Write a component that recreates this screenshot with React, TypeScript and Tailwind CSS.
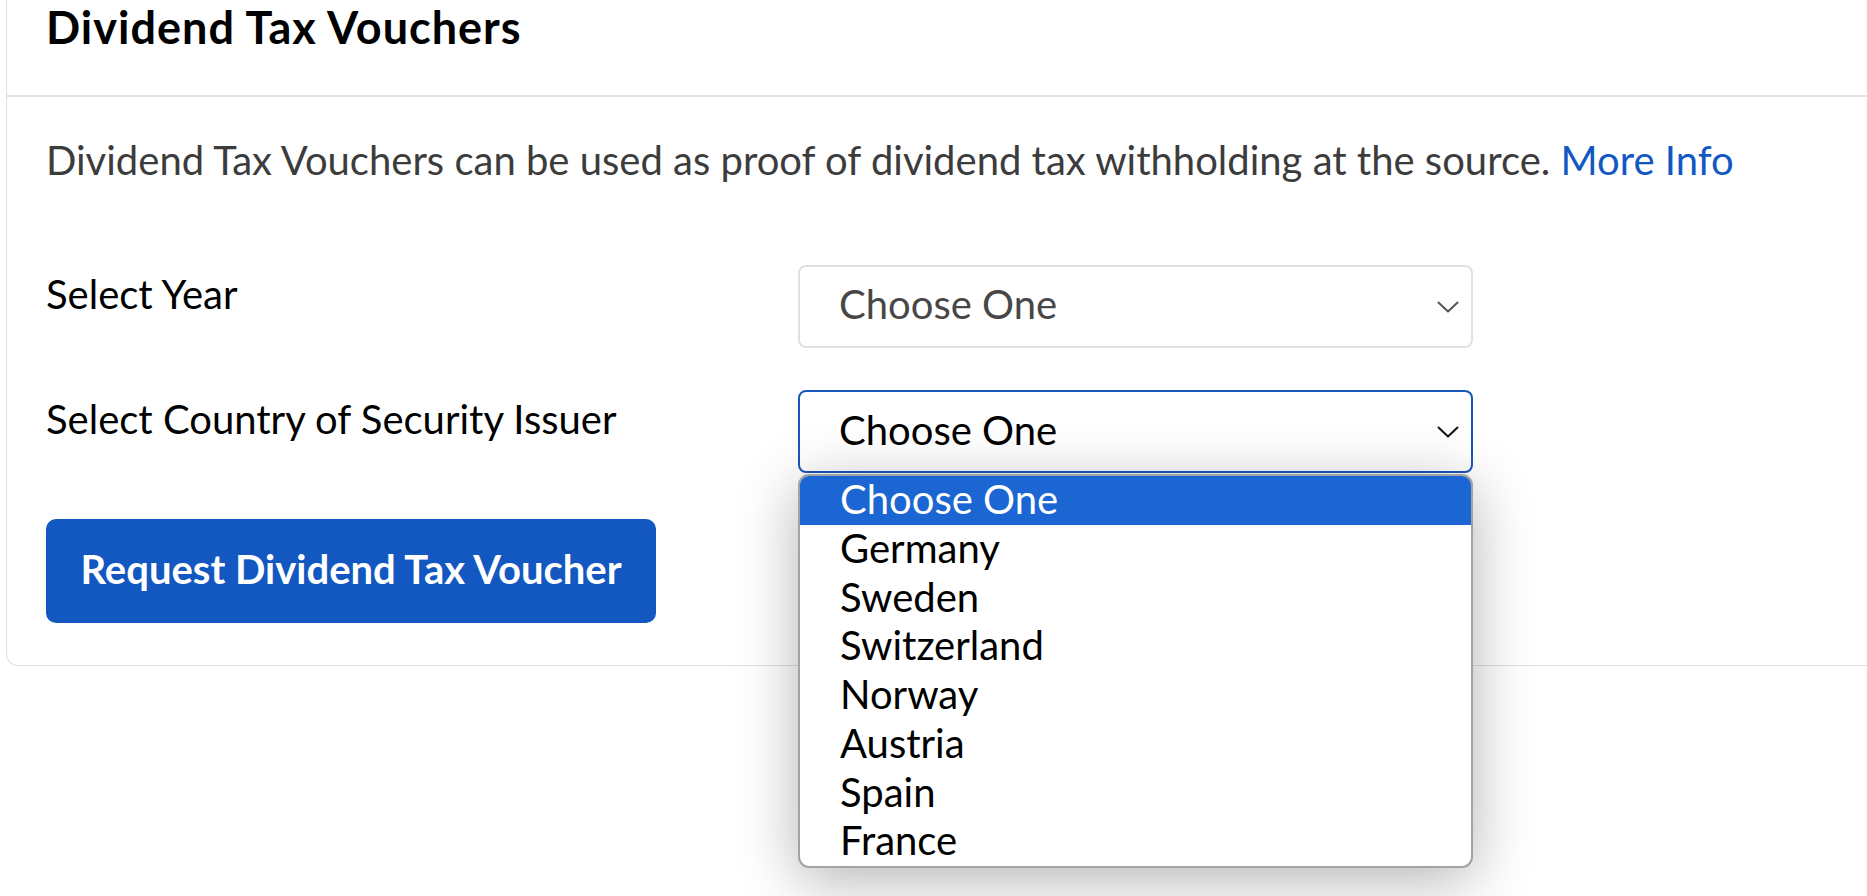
import React from "react";

const countries = ["Choose One", "Germany", "Sweden", "Switzerland", "Norway", "Austria", "Spain", "France"];

function Chevron({ color }: { color: string }) {
  return (
    <svg width="22" height="12" viewBox="0 0 22 12" fill="none" className="shrink-0">
      <path d="M1.5 1.5 L11 10.5 L20.5 1.5" stroke={color} strokeWidth="2" strokeLinecap="round" strokeLinejoin="round" />
    </svg>
  );
}

export default function App() {
  return (
    <div
      className="min-h-screen w-full bg-white overflow-hidden"
      style={{ fontFamily: "Lato, 'Liberation Sans', sans-serif" }}
    >
      {/* ── Card ── */}
      <div className="ml-[6px] -mt-[4px] w-[1900px] border border-[#dedede] rounded-b-[12px]">
        <div className="h-[100px] border-b-2 border-[#e2e2e2] px-[39px] pt-[3px]">
          <h1 className="text-[45px] leading-[54px] font-bold tracking-[1px] text-black">Dividend Tax Vouchers</h1>
        </div>

        <div className="px-[39px] pt-[39px] pb-[42px]">
          <p className="text-[40px] leading-[48px] text-[#3c3c3c]">
            Dividend Tax Vouchers can be used as proof of dividend tax withholding at the source.{" "}
            <a className="text-[#1258c3]">More Info</a>
          </p>

          {/* Year */}
          <div className="flex mt-[81px]">
            <div className="w-[752px] pt-[5px] text-[40px] leading-[48px] text-black">Select Year</div>
            <div className="w-[675px] h-[83px] border-2 border-[#e0e0e0] rounded-[8px] flex items-center justify-between pl-[39px] pr-[12px]">
              <span className="text-[40px] leading-[48px] pb-[5px] text-[#474747]">Choose One</span>
              <Chevron color="#555555" />
            </div>
          </div>

          {/* Country */}
          <div className="flex mt-[42px]">
            <div className="w-[752px] pt-[5px] text-[40px] leading-[48px] text-black">
              Select Country of Security Issuer
            </div>
            <div className="relative w-[675px]">
              <div className="h-[83px] border-2 border-[#1a56be] rounded-[8px] flex items-center justify-between pl-[39px] pr-[12px]">
                <span className="text-[40px] leading-[48px] pb-[4px] text-black">Choose One</span>
                <Chevron color="#111111" />
              </div>
              <ul className="absolute left-0 top-full mt-[1px] w-[675px] bg-white border-2 border-[#a3a3a3] rounded-[11px] overflow-hidden shadow-[0_12px_60px_rgba(0,0,0,0.3)] z-10">
                {countries.map((c, i) => (
                  <li
                    key={c}
                    className={`h-[48.8px] flex items-center pl-[40px] pb-[3px] text-[40px] ${
                      i === 0 ? "bg-[#1b66d2] text-white" : "text-black"
                    }`}
                  >
                    {c}
                  </li>
                ))}
              </ul>
            </div>
          </div>

          <button className="mt-[46px] w-[610px] h-[104px] pb-[4px] rounded-[10px] bg-[#1357c0] text-white text-[40px] font-bold">
            Request Dividend Tax Voucher
          </button>
        </div>
      </div>
    </div>
  );
}
